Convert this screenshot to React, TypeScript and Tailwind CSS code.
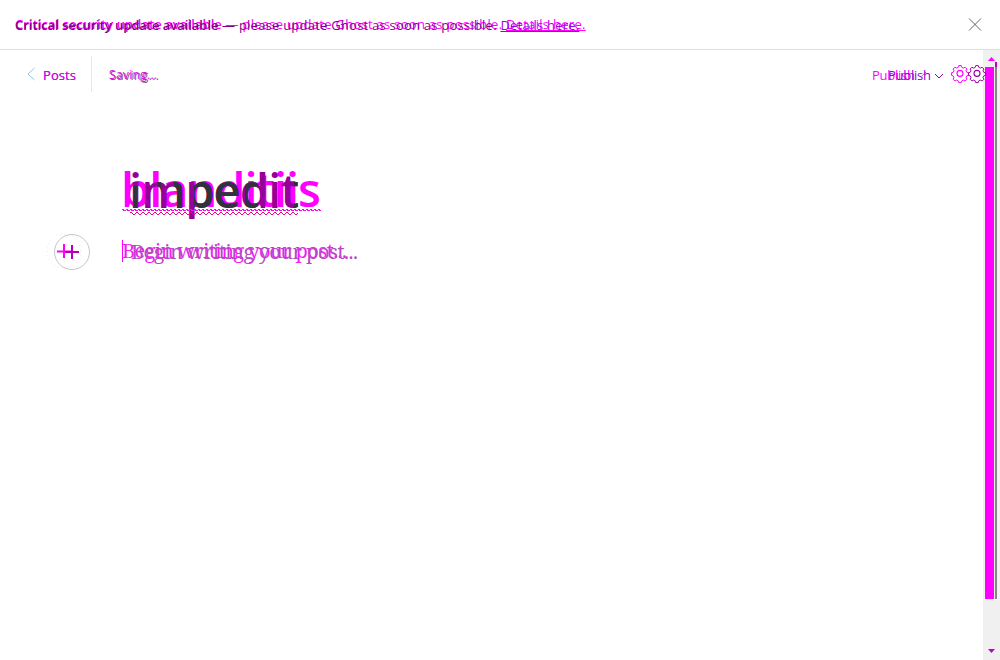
import type { ReactNode } from "react";

function Line({ x, y, w, className, children }: { x: number; y: number; w: number; className: string; children: string }) {
  return (
    <text x={x} y={y} textLength={w} lengthAdjust="spacing" className={className}>
      {children}
    </text>
  );
}

function Overlay({ children }: { children: ReactNode }) {
  return <div className="grid [&>*]:col-start-1 [&>*]:row-start-1">{children}</div>;
}

const gear = "M-1.4-8h2.8l.7 2.1 1.6.7 2-1 2 2-1 2 .7 1.5 2.1.7v2.8l-2.1.7-.7 1.6 1 2-2 2-2-1-1.6.7-.7 2.1h-2.8l-.7-2.1-1.6-.7-2 1-2-2 1-2-.7-1.6-2.1-.7v-2.8l2.1-.7.7-1.5-1-2 2-2 2 1 1.6-.7z";

function Gear({ x, color }: { x: number; color: string }) {
  return (
    <g transform={`translate(${x} 23.4)`} fill="none" stroke={color} strokeWidth="1.1">
      <path d={gear} transform="translate(0 -.6) scale(.9)" />
      <circle r="3" />
    </g>
  );
}

export default function App() {
  return (
    <div className="flex h-[660px] w-[1000px] flex-col overflow-hidden bg-white font-['Open_Sans','Noto_Sans',sans-serif]">
      <header className="flex h-[50px] shrink-0 items-center justify-between border-b border-[#dfdfdf] pl-[15px] pr-[18px]">
        <Overlay>
          <p className="whitespace-nowrap text-[13px] leading-5 tracking-[0.28px] text-[#ff00ff]">
            <span className="font-semibold tracking-[0.07px]">Critical security update available</span> — please update Ghost as soon as possible. <span className="underline">Details here.</span>
          </p>
          <p className="whitespace-nowrap pt-px text-[13px] leading-5 tracking-[0.23px] text-[#850088]">
            <span className="font-semibold tracking-[-0.03px]">Critical security update available</span> — please update Ghost as soon as possible. <span className="text-[#a000df] underline">Details here.</span>
          </p>
        </Overlay>
        <svg width="14" height="14" viewBox="0 0 14 14" stroke="#63676b" strokeWidth="1"><path d="m1 .5 12 12M13 .5l-12 12" /></svg>
      </header>
      <div className="flex min-h-0 flex-1">
        <main className="relative z-10 flex w-[983px] flex-col">
          <div className="flex h-[48px] shrink-0 items-center">
            <svg width="26" height="48" className="ml-[20px] shrink-0"><path d="m14.5 18-6.5 6 6.5 6" fill="none" stroke="#8dcbe9" strokeWidth="1" /></svg>
            <svg width="937" height="48" className="-ml-[4px] shrink-0 overflow-visible text-[13px]">
              <Line x={1} y={30} w={33} className="fill-[#ff00ff]">Posts</Line>
              <Line x={1} y={29.5} w={33} className="fill-[#a81fce]">Posts</Line>
              <path d="M49.5 6v36" stroke="#e3e9ef" />
              <Line x={68} y={29.5} w={49} className="fill-[#87508e] text-[12px]">Saving...</Line>
              <Line x={67} y={29} w={48} className="fill-[#d918dc] text-[12px]">Saving...</Line>
              <Line x={830} y={30} w={43} className="fill-[#ff00ff]">Publish</Line>
              <path d="m880 26 4-4" fill="none" stroke="#c775d2" />
              <Line x={846} y={30} w={43} className="fill-[#8f00d0]">Publish</Line>
              <path d="m893 24 4 4 4-4" fill="none" stroke="#9d00a2" />
              <Gear x={918} color="#ff00ff" />
              <Gear x={935} color="#9d00a2" />
            </svg>
          </div>
          <section className="flex flex-col pt-[62px]">
            <svg width="983" height="65" className="overflow-visible text-[47px] font-semibold">
              <defs>
                <pattern id="wave-magenta" x="122" y="49" width="4" height="2" patternUnits="userSpaceOnUse">
                  <path d="M0 0h2v1H0zM1 1h3v1H1z" fill="#ff00ff" />
                </pattern>
                <pattern id="wave-pink" x="130" y="52" width="6" height="3" patternUnits="userSpaceOnUse">
                  <path d="M0 0h2v1H0zM2 1h1v1H2zM3 2h2v1H3zM5 1h1v1H5z" fill="#f0007c" />
                </pattern>
                <clipPath id="title-center">
                  <path d="M134 26h3v22h-3zM158 22h3v10h-3zM174 22h8v26h-8zM194 22h46v26h-46zM245 22h13v26h-13zM294 22h5v26h-5z" />
                </clipPath>
              </defs>
              <Line x={121} y={47} w={200} className="fill-[#ff00ff]">blanditiis</Line>
              <Line x={129} y={48} w={170} className="fill-[#960099]">impedit</Line>
              <g clipPath="url(#title-center)"><Line x={129} y={48} w={170} className="fill-[#30343a]">impedit</Line></g>
              <rect x="122" y="49" width="199" height="2" fill="url(#wave-magenta)" />
              <rect x="130" y="52" width="168" height="3" fill="url(#wave-pink)" />
            </svg>
            <svg width="983" height="50" className="overflow-visible font-['Noto_Serif','Liberation_Serif',serif] text-[20px]">
              <circle cx="64" cy="26" r="17" fill="none" stroke="#e9e9e9" strokeDasharray="1 3" />
              <circle cx="72" cy="27" r="17.5" fill="none" stroke="#c6c6c6" />
              <path d="M57 26.5h15M64 19v14" stroke="#ff00ff" strokeWidth="2" />
              <path d="M65 27h14M72 20v14" stroke="#b000b8" strokeWidth="2" />
              <path d="M122.5 15v22" stroke="#ff00ff" />
              <Line x={122} y={32.5} w={225} className="fill-[#f71cf7]">Begin writing your post...</Line>
              <Line x={131} y={34} w={227} className="fill-[#b849c4]">Begin writing your post...</Line>
            </svg>
          </section>
        </main>
        <aside className="flex w-[17px] flex-col bg-[#f0f0f0]">
          <svg width="17" height="610" viewBox="0 0 17 610">
            <path d="m5 11 3.5-4L12 11z" fill="#ff00ff" />
            <path d="M2 17h9v532H2z" fill="#ff00ff" />
            <path d="M12 17h2v532h-2z" fill="#858585" />
            <path d="M12 12h2v5h-2z" fill="#bc00bc" />
            <path d="M5 599h7l-3.5 4z" fill="#c000c0" />
          </svg>
        </aside>
      </div>
    </div>
  );
}
